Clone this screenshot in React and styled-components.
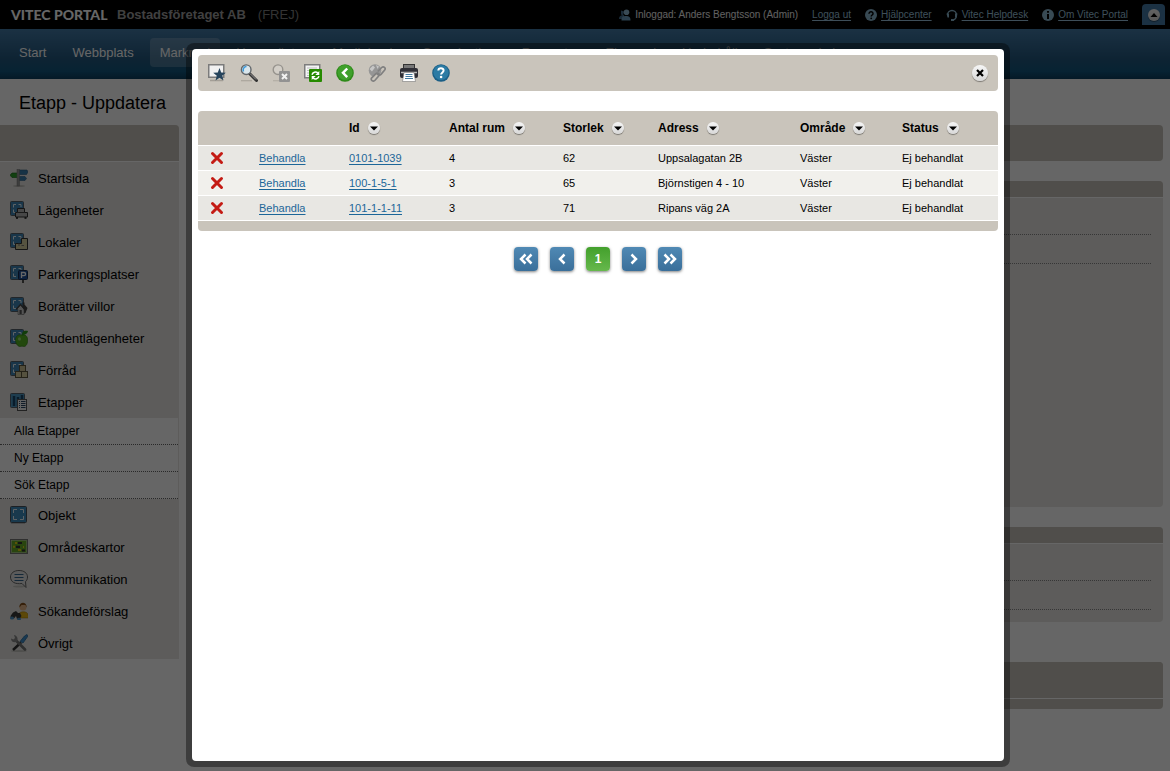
import React, { useState } from 'react'
import styled, { createGlobalStyle } from 'styled-components'

const GlobalStyle = createGlobalStyle`
  * {
    box-sizing: border-box;
  }
  body {
    margin: 0;
    background-color: #fff;
    font-family: "Liberation Sans", Arial, sans-serif;
    font-size: 12px;
    color: #000;
  }
  button {
    padding: 0;
    border: none;
    background: none;
    font-family: inherit;
    cursor: pointer;
  }
  ul {
    margin: 0;
    padding: 0;
    list-style: none;
  }
  svg {
    display: block;
    flex: none;
  }
`

const Page = styled.div`
  min-height: 100vh;
  overflow: hidden;
`
const TopBar = styled.header`
  height: 29px;
  padding: 0 5px 0 11px;
  display: flex;
  align-items: center;
  background-color: #000;
  white-space: nowrap;
`
const Logo = styled.span`
  width: 106px;
  font-family: Lato, "Open Sans", sans-serif;
  font-size: 14px;
  font-weight: 900;
  color: #fff;
`
const Company = styled.span`
  font-size: 13px;
  font-weight: 700;
  color: #a0a0a0;
`
const Site = styled.span`
  margin-left: 12px;
  font-size: 13px;
  color: #808080;
`
const TopLinks = styled.div`
  margin-left: auto;
  display: flex;
  align-items: center;
  gap: 14px;
  font-size: 10px;
  color: #f0f0f0;
`
const TopItem = styled.span`
  display: flex;
  align-items: center;
  gap: 4px;
`
const TopLink = styled.a`
  color: #9cc4de;
  text-underline-offset: 2px;
`
const CollapseTab = styled.div`
  align-self: flex-end;
  width: 23px;
  height: 21px;
  display: flex;
  justify-content: center;
  align-items: center;
  border-radius: 4px 4px 0 0;
  background-color: #447ba8;
`

const Nav = styled.nav`
  height: 50px;
  padding: 0 9px 3px;
  display: flex;
  align-items: center;
  gap: 6px;
  background: linear-gradient(#447ba8, #23587f 60%, #12577f 85%, #0c4060);
`
const NavLink = styled.a`
  height: 29px;
  padding: 0 10px;
  line-height: 29px;
  border-radius: 4px;
  font-size: 13px;
  color: #fff;
  text-decoration: none;
  background-color: ${({ $active }) => ($active ? 'rgba(255, 255, 255, 0.2)' : 'transparent')};
`

const Title = styled.h1`
  height: 46px;
  margin: 0;
  padding: 0 19px;
  line-height: 48px;
  font-size: 18px;
  font-weight: 400;
`
const Columns = styled.div`
  display: flex;
  align-items: flex-start;
  gap: 20px;
  padding-right: 7px;
`
const Sidebar = styled.aside`
  flex: none;
  width: 179px;
  background-color: #e8e7e3;
  border-radius: 0 4px 0 0;
`
const SidebarHead = styled.div`
  height: 37px;
  border-bottom: 1px solid #fff;
  border-radius: 0 4px 0 0;
  background-color: #c9c4bb;
`
const MenuLink = styled.a`
  height: 32px;
  padding: 0 10px;
  display: flex;
  align-items: center;
  gap: 10px;
  font-size: 13px;
  color: #000;
  text-decoration: none;
`
const SubMenu = styled.ul`
  margin-right: 1px;
  background-color: #fff;
`
const SubLink = styled.a`
  height: 27px;
  padding: 0 14px;
  display: block;
  border-bottom: 1px dotted #666;
  line-height: 26px;
  color: #000;
  text-decoration: none;
`

const Content = styled.main`
  flex: 1;
  display: flex;
  flex-direction: column;
  gap: 20px;
`
const Panel = styled.section`
  overflow: hidden;
  border-radius: 4px;
  background-color: ${({ $dark }) => ($dark ? '#c9c4bb' : '#e8e7e3')};
`
const PanelHead = styled.div`
  height: ${({ $tall }) => ($tall ? '37px' : '17px')};
  border-bottom: 1px solid #fff;
  background-color: #c9c4bb;
`
const PanelBar = styled.div`
  height: 36px;
  border-radius: 4px;
  background-color: #c9c4bb;
`
const PanelBody = styled.div`
  padding: 8px 12px 12px;
  min-height: ${({ $height }) => $height}px;
`
const PanelLine = styled.div`
  height: 29px;
  border-bottom: 1px dotted #888;
`
const PanelFoot = styled.div`
  height: 10px;
`
const Spacer = styled.div`
  height: 0;
`

const Overlay = styled.div`
  position: fixed;
  inset: 0;
  padding: 43px 160px 4px 186px;
  display: flex;
  background-color: rgba(0, 0, 0, 0.6);
`
const Frame = styled.div`
  flex: 1;
  padding: 6px;
  display: flex;
  border-radius: 8px;
  background-color: rgba(0, 0, 0, 0.4);
`
const Dialog = styled.div`
  flex: 1;
  padding: 6px;
  border-radius: 4px;
  background-color: #fff;
`
const Toolbar = styled.div`
  height: 36px;
  margin-bottom: 20px;
  padding: 0 10px;
  display: flex;
  align-items: center;
  gap: 14px;
  border-radius: 4px;
  background-color: #c9c4bb;
`
const IconButton = styled.button`
  width: 18px;
  height: 18px;
`
const RoundButton = styled.button`
  flex: none;
  width: ${({ $size }) => $size}px;
  height: ${({ $size }) => $size}px;
  display: flex;
  justify-content: center;
  align-items: center;
  border-radius: 50%;
  background: linear-gradient(#f6f6f6, #d8d8d8);
  box-shadow: 0 1px 1px rgba(0, 0, 0, 0.4);
`
const CloseSlot = styled.div`
  margin-left: auto;
`

const TableWrap = styled.div`
  overflow: hidden;
  border-radius: 4px;
`
const Table = styled.table`
  width: 100%;
  table-layout: fixed;
  border-collapse: separate;
  border-spacing: 0;
  text-align: left;
  white-space: nowrap;
`
const Th = styled.th`
  height: 35px;
  padding: 0 0 0 10px;
  border-bottom: 1px solid #fff;
  background-color: #c9c4bb;
  font-size: 12px;
`
const ThInner = styled.div`
  display: flex;
  align-items: center;
  gap: 8px;
`
const Row = styled.tr`
  background-color: #e8e7e3;
  &:nth-child(even) {
    background-color: #f1f0ec;
  }
`
const Td = styled.td`
  height: 25px;
  padding: 0 0 0 10px;
  border-bottom: 1px solid #fff;
  font-size: 11px;
`
const TableFoot = styled.div`
  height: 10px;
  background-color: #c9c4bb;
`
const DataLink = styled.a`
  color: #1c6698;
  text-underline-offset: 2px;
`
const DeleteButton = styled.button`
  display: block;
  margin-left: 2px;
`

const Pagination = styled.nav`
  margin-top: 16px;
  display: flex;
  justify-content: center;
  gap: 12px;
`
const PageButton = styled.button`
  width: 24px;
  height: 24px;
  display: flex;
  justify-content: center;
  align-items: center;
  border-radius: 4px;
  box-shadow: 0 1px 3px rgba(0, 0, 0, 0.5);
  color: #fff;
  font-size: 12px;
  font-weight: 700;
  background: ${({ $current }) =>
    $current ? 'linear-gradient(#43a02c, #66b84c)' : 'linear-gradient(#5089b4, #3a6f9a)'};
`

const Icon = ({ size = 18, box = 18, children }) => (
  <svg width={size} height={size} viewBox={`0 0 ${box} ${box}`} aria-hidden="true">
    {children}
  </svg>
)

// blue floor plan tile that most of the menu icons are built on
const Plan = () => (
  <>
    <rect x="0.5" y="0.5" width="13" height="14" rx="1" fill="#3f87b8" stroke="#56606a" />
    <path d="M3.500 6.500V3.500H6M8.500 3.500h2.500V6M3.500 8.500v3H6" fill="none" stroke="#e8f4fc" />
  </>
)

const menuIcons = {
  start: (
    <>
      <ellipse cx="9" cy="17" rx="6" ry="1" fill="#c0beb8" />
      <path d="M9 1h8l1 2-1.500 2.500H9z" fill="#3a7fb0" stroke="#2f5f85" strokeWidth="0.600" />
      <path d="M9 7.500h6l1.500 2-1.500 2H9z" fill="#3a7fb0" stroke="#2f5f85" strokeWidth="0.600" />
      <path d="M8 4H2L0 6.200 2 8.500h6z" fill="#2fa02c" stroke="#156a15" strokeWidth="0.600" />
      <rect x="7" y="0.500" width="2.500" height="16.500" fill="#999" stroke="#777" strokeWidth="0.500" />
    </>
  ),
  apartment: (
    <>
      <Plan />
      <path d="M7.500 7.500h7v4h3v4.500h-12v-4.500h2z" fill="#b5b5b5" stroke="#333" />
      <path d="M7.500 11.500h7" stroke="#444" />
      <path d="M6 17h2M14.500 17h2" stroke="#111" strokeWidth="1.500" />
    </>
  ),
  premises: (
    <>
      <Plan />
      <path d="M5.500 10.500H11.500V5.500h6v11h-12z" fill="#d8cfa0" stroke="#333" />
      <path d="M9 10.500v2.500M14 12.500h-2.500" stroke="#777" fill="none" />
    </>
  ),
  parking: (
    <>
      <Plan />
      <path d="M13 14v4" stroke="#222" strokeWidth="1.500" />
      <rect x="8.500" y="5.500" width="9" height="9" rx="1" fill="#1d4f9a" stroke="#152a4c" />
      <path d="M11.500 13V7.500H14a1.600 1.600 0 0 1 0 3.200h-2.500" fill="none" stroke="#fff" strokeWidth="1.300" />
    </>
  ),
  villa: (
    <>
      <Plan />
      <path d="M12.500 8V5.500h2v2L17.500 11l-2 5-3.500 1.500z" fill="#444" />
      <path d="M7 12l3.500-4 3.500 4v5.500H8V12.500z" fill="#d4d4d4" stroke="#666" strokeWidth="0.600" />
      <path d="M6 12.500L10.500 7.500l4 5" fill="none" stroke="#444" strokeWidth="1.200" />
      <rect x="9.500" y="13" width="2.200" height="4" fill="#555" />
    </>
  ),
  student: (
    <>
      <Plan />
      <path d="M12 6c-3.500-1-6.500 1-6.500 5.200 0 3.800 2.700 6.300 4.300 6.300.900 0 1.200-.300 2.200-.300s1.300.300 2.200.300c1.600 0 3.500-2.500 3.500-6.300 0-4.200-2.700-6-5.700-5.200z" fill="#55b522" stroke="#2f7a10" strokeWidth="0.600" />
      <path d="M12 6.500c-.500-4 2.500-5.500 6-4.500-.500 3-3 3.500-6 4.500z" fill="#2f9a1d" />
      <ellipse cx="9.500" cy="10" rx="1.500" ry="1.800" fill="#9ddc72" />
    </>
  ),
  storage: (
    <>
      <Plan />
      <rect x="9.500" y="4.500" width="6" height="6" fill="#cdc193" stroke="#5c563e" />
      <rect x="5.500" y="10.500" width="6" height="6" fill="#d8cc9f" stroke="#5c563e" />
      <rect x="11.500" y="10.500" width="6" height="6" fill="#d8cc9f" stroke="#5c563e" />
    </>
  ),
  stage: (
    <>
      <rect x="0.500" y="0.500" width="14" height="14" rx="1" fill="#4d9ac6" stroke="#56606a" />
      <path d="M4 3v10M8 4v9M12 2v8" stroke="#18486c" strokeWidth="2.500" />
      <rect x="7.500" y="6.500" width="9" height="11" fill="#f4f4f4" stroke="#555" />
      <path d="M9 8.500h1M11 8.500h4.500M9 10.500h1M11 10.500h4.500M9 12.500h1M11 12.500h4.500M9 14.500h1M11 14.500h4.500" stroke="#2b4a68" />
    </>
  ),
  object: (
    <>
      <path d="M1 17.500h14" stroke="#bbb" />
      <rect x="0.500" y="0.500" width="16" height="16" rx="1" fill="#3f8fc1" stroke="#4a525a" />
      <path d="M3.500 7V3.500H7M10 3.500h3.500V7M13.500 10v3.500H10M7 13.500H3.500V10" fill="none" stroke="#e8f4fc" />
    </>
  ),
  map: (
    <>
      <rect x="0.500" y="1.500" width="17" height="14" fill="#67ad27" stroke="#777" />
      <rect x="1.500" y="2.500" width="15" height="12" fill="none" stroke="#c8d8b8" strokeWidth="0.600" />
      <path d="M8 5h4M6 8.800h4M12 12.500h3" stroke="#333" strokeWidth="2.200" />
      <path d="M5 5h2M3 8.800h2M8 12h3M13 9h1" stroke="#e5cf13" strokeWidth="2" />
    </>
  ),
  chat: (
    <>
      <ellipse cx="9" cy="16.500" rx="6" ry="1" fill="#c6c5c0" />
      <path d="M9 .500c5 0 8.500 2.700 8.500 6.500 0 2.200-.800 3.500-2 4.700l.500 5.800-4-4C5 14.500.500 11.800.500 7 .500 3.200 4 .500 9 .500z" fill="#e4e4e4" stroke="#666" />
      <path d="M4.500 4.500h9M4.500 7.500h9M4.500 10.500h9" stroke="#35678f" />
    </>
  ),
  seeker: (
    <>
      <path d="M9 16V11.500c1-2 7-2.500 8.500 0 1 1.500 1 3 1 4.500z" fill="#e5b316" stroke="#9c7406" strokeWidth="0.500" />
      <circle cx="13" cy="5" r="3.500" fill="#e7b78a" />
      <path d="M9.500 5.500C8.500-1 17.500-1 16.500 5.500L15.500 3h-4z" fill="#87511d" />
      <path d="M3 10.500l3-1.500 2 2h2l1.500 3-2 3H7l-1-3-2 2.500-3 .500-.500-3z" fill="#3a3a3a" />
      <ellipse cx="2" cy="16" rx="2" ry="1.500" fill="#4b92c6" />
      <ellipse cx="9" cy="17" rx="2" ry="1.300" fill="#4b92c6" />
    </>
  ),
  tools: (
    <>
      <ellipse cx="9" cy="17" rx="8" ry="1" fill="#c6c5c0" />
      <path d="M10 7.500L14.500 2l2.500-1.500 1 1.500-5 7z" fill="#3d8fce" stroke="#2f6d9d" strokeWidth="0.800" />
      <path d="M11 8.500L3 16" stroke="#333" strokeWidth="2.400" />
      <path d="M6 6.500l9 9" stroke="#777" strokeWidth="2.800" strokeLinecap="round" />
      <path d="M4 1l1 3-1.500 1.500-2.500-1C1 8 4 9 7 7.500 8.500 4.500 7 1.500 4 1z" fill="#8a8a8a" />
    </>
  ),
}

const toolIcons = {
  favourite: (
    <>
      <path d="M2 16.500h13" stroke="#a39e96" strokeWidth="1.500" />
      <rect x="0.750" y="0.750" width="15" height="12.500" fill="#f1f1f1" stroke="#7b7b7b" strokeWidth="1.500" />
      <path d="M11.500 4l1.700 4.500 4.600.200-3.600 3 1.300 4.800-4-2.800-4 2.800 1.300-4.800-3.600-3 4.600-.200z" fill="#26445c" />
    </>
  ),
  search: (
    <>
      <path d="M1 16.700h11" stroke="#aaa59c" strokeWidth="1.200" />
      <path d="M9.500 9.500l7 7" stroke="#333" strokeWidth="3" strokeLinecap="round" />
      <path d="M10 9.500l6 6" stroke="#999" strokeWidth="1" />
      <circle cx="6.200" cy="5.700" r="4.800" fill="#d9e6ec" stroke="#62676b" strokeWidth="1.400" />
      <path d="M3.500 7.500a3.500 3.500 0 0 1 3-5" fill="none" stroke="#3b9ada" strokeWidth="1.500" />
    </>
  ),
  clearSearch: (
    <>
      <path d="M1 16.700h6" stroke="#b3aea5" strokeWidth="1.200" />
      <circle cx="6" cy="5.700" r="4.800" fill="#d2cec7" stroke="#96938d" strokeWidth="1.400" />
      <path d="M9 9.500l2 2" stroke="#96938d" strokeWidth="2" />
      <rect x="7" y="7" width="11" height="11" rx="1" fill="#929292" />
      <path d="M10 10l5 5M15 10l-5 5" stroke="#f2f2f2" strokeWidth="2" />
    </>
  ),
  refresh: (
    <>
      <rect x="0.750" y="0.750" width="15" height="13" fill="#f4f4f4" stroke="#7d7d7d" strokeWidth="1.500" />
      <path d="M3 4h10M3 6.500h10M3 9h3M3 11.500h2" stroke="#bdbdbd" />
      <rect x="5" y="5" width="13" height="13" rx="1" fill="#268a00" />
      <path d="M8 10.800a3.700 3.700 0 0 1 5.800-1.900M15 12.200a3.700 3.700 0 0 1-5.800 1.900" fill="none" stroke="#fff" strokeWidth="1.500" />
      <path d="M15.300 7v4h-4zM7.700 16v-4h4z" fill="#fff" />
    </>
  ),
  back: (
    <>
      <circle cx="9" cy="9" r="8.800" fill="#2d8a18" />
      <circle cx="9" cy="8.500" r="7.600" fill="#3fa02b" />
      <path d="M11.200 4.500L7 8.800l4.200 4.300" fill="none" stroke="#fff" strokeWidth="2.500" />
    </>
  ),
  link: (
    <>
      <circle cx="7" cy="6.500" r="6.300" fill="#969696" />
      <path d="M1.500 5l3.500-3.500 2 2-3 4zM8 1l3 1.500-1.500 2.500z" fill="#c6c6c6" />
      <path d="M3.700 13.800l4-4c1.800-1.800 4.500.200 3 2.200l-3.700 4.300c-1.800 2-5-.500-3.300-2.500z" fill="#c9c4bb" stroke="#808080" strokeWidth="1.700" />
      <path d="M9.700 7.500l4-4c1.800-1.800 4.500.500 3 2.500l-3.700 4.300c-1.500 1.500-4 .700-3.800-1" fill="none" stroke="#808080" strokeWidth="1.700" />
    </>
  ),
  print: (
    <>
      <rect x="3.500" y="0.500" width="11" height="5" fill="#777" stroke="#333" />
      <rect x="0" y="4" width="18" height="10" rx="2" fill="#2e2e35" />
      <path d="M1 8.500h16" stroke="#bbb" strokeWidth="1.500" />
      <path d="M4 8.500h10l1.500 9h-13z" fill="#fff" stroke="#777" strokeWidth="0.600" />
      <path d="M5.500 10.500h7M5.500 12.500h7M5 14.500h8" stroke="#447a9f" />
    </>
  ),
  help: (
    <>
      <circle cx="9" cy="9" r="8.800" fill="#1b5f86" />
      <circle cx="9" cy="8.500" r="7.600" fill="#2c7ba4" />
      <path d="M6.300 6.500C6.500 3.500 11.700 3.600 11.600 6.600c0 1.800-2.500 1.900-2.500 4" fill="none" stroke="#fff" strokeWidth="2" />
      <circle cx="9.100" cy="13" r="1.300" fill="#fff" />
    </>
  ),
}

const smallIcons = {
  user: (
    <>
      <path d="M2 1.500l3 1-1 4-2-1zM0 10c0-3 2-4 5-4v4z" fill="#41698a" />
      <circle cx="7.500" cy="3.200" r="2.800" fill="#8fb8d4" />
      <path d="M2.500 11.500c0-4 1.500-4.500 4.500-4.500s4.500 1 4.500 4.500z" fill="#6c9fc2" />
    </>
  ),
  question: (
    <>
      <circle cx="6" cy="6" r="6" fill="#8db9d2" />
      <path d="M4 4.700C4 2 8.200 2.200 8 4.700 8 6 6.200 6 6.200 7.500" fill="none" stroke="#000" strokeWidth="1.500" />
      <circle cx="6.200" cy="9.300" r="0.900" fill="#000" />
    </>
  ),
  headset: (
    <>
      <path d="M1.500 6a4.500 4.500 0 0 1 9 0c0 3-1 4.500-3.500 5" fill="none" stroke="#8db9d2" strokeWidth="1.300" />
      <path d="M0.500 4.500h2.500v4H1.500zM9 4.500h2.500l-1 4H9zM5 10h3v2H5z" fill="#8db9d2" />
    </>
  ),
  info: (
    <>
      <circle cx="6" cy="6" r="6" fill="#8db9d2" />
      <path d="M6 5v5M6 2v1.800" stroke="#000" strokeWidth="2" />
    </>
  ),
}

const navItems = ['Start', 'Webbplats', 'Marknad', 'Hyresgäster', 'Mediabank', 'Organisation', 'Rapporter', 'Ekonomi', 'Underhåll', 'Systemadmin']

const menuItems = [
  { icon: 'start', label: 'Startsida' },
  { icon: 'apartment', label: 'Lägenheter' },
  { icon: 'premises', label: 'Lokaler' },
  { icon: 'parking', label: 'Parkeringsplatser' },
  { icon: 'villa', label: 'Borätter villor' },
  { icon: 'student', label: 'Studentlägenheter' },
  { icon: 'storage', label: 'Förråd' },
  { icon: 'stage', label: 'Etapper', sub: ['Alla Etapper', 'Ny Etapp', 'Sök Etapp'] },
  { icon: 'object', label: 'Objekt' },
  { icon: 'map', label: 'Områdeskartor' },
  { icon: 'chat', label: 'Kommunikation' },
  { icon: 'seeker', label: 'Sökandeförslag' },
  { icon: 'tools', label: 'Övrigt' },
]

const tools = [
  ['favourite', 'Favorit'],
  ['search', 'Sök'],
  ['clearSearch', 'Rensa sökning'],
  ['refresh', 'Uppdatera'],
  ['back', 'Tillbaka'],
  ['link', 'Länk'],
  ['print', 'Skriv ut'],
  ['help', 'Hjälp'],
]

const columns = ['Id', 'Antal rum', 'Storlek', 'Adress', 'Område', 'Status']
const columnWidths = [51, 90, 100, 114, 95, 142, 102, 106]

const rows = [
  { id: '0101-1039', rooms: 4, size: 62, address: 'Uppsalagatan 2B', area: 'Väster', status: 'Ej behandlat' },
  { id: '100-1-5-1', rooms: 3, size: 65, address: 'Björnstigen 4 - 10', area: 'Väster', status: 'Ej behandlat' },
  { id: '101-1-1-11', rooms: 3, size: 71, address: 'Ripans väg 2A', area: 'Väster', status: 'Ej behandlat' },
]

function Header() {
  return (
    <>
      <TopBar>
        <Logo>VITEC PORTAL</Logo>
        <Company>Bostadsföretaget AB</Company>
        <Site>(FREJ)</Site>
        <TopLinks>
          <TopItem>
            <Icon size={12} box={12}>{smallIcons.user}</Icon>
            Inloggad: Anders Bengtsson (Admin)
          </TopItem>
          <TopLink href="#logout">Logga ut</TopLink>
          <TopItem>
            <Icon size={12} box={12}>{smallIcons.question}</Icon>
            <TopLink href="#help">Hjälpcenter</TopLink>
          </TopItem>
          <TopItem>
            <Icon size={12} box={12}>{smallIcons.headset}</Icon>
            <TopLink href="#helpdesk">Vitec Helpdesk</TopLink>
          </TopItem>
          <TopItem>
            <Icon size={12} box={12}>{smallIcons.info}</Icon>
            <TopLink href="#about">Om Vitec Portal</TopLink>
          </TopItem>
          <CollapseTab>
            <RoundButton $size={12} aria-label="Dölj">
              <Icon size={8} box={8}><path d="M0.500 6L4 2l3.500 4z" /></Icon>
            </RoundButton>
          </CollapseTab>
        </TopLinks>
      </TopBar>
      <Nav>
        {navItems.map((item) => (
          <NavLink key={item} href="#nav" $active={item === 'Marknad'}>{item}</NavLink>
        ))}
      </Nav>
    </>
  )
}

function Menu() {
  return (
    <Sidebar>
      <SidebarHead />
      <ul>
        {menuItems.map((item) => (
          <li key={item.label}>
            <MenuLink href="#menu">
              <Icon>{menuIcons[item.icon]}</Icon>
              {item.label}
            </MenuLink>
            {item.sub && (
              <SubMenu>
                {item.sub.map((label) => (
                  <li key={label}><SubLink href="#sub">{label}</SubLink></li>
                ))}
              </SubMenu>
            )}
          </li>
        ))}
      </ul>
    </Sidebar>
  )
}

function ObjectTable({ rows, onDelete }) {
  return (
    <TableWrap>
      <Table>
        <colgroup>
          {columnWidths.map((width, i) => <col key={i} width={width} />)}
        </colgroup>
        <thead>
          <tr>
            <Th />
            <Th />
            {columns.map((column) => (
              <Th key={column}>
                <ThInner>
                  {column}
                  <RoundButton $size={12} aria-label={`Sortera ${column}`}>
                    <Icon size={8} box={8}><path d="M0 2.500h8L4 6.500z" /></Icon>
                  </RoundButton>
                </ThInner>
              </Th>
            ))}
          </tr>
        </thead>
        <tbody>
          {rows.map((row) => (
            <Row key={row.id}>
              <Td>
                <DeleteButton aria-label={`Ta bort ${row.id}`} onClick={() => onDelete(row.id)}>
                  <Icon size={14} box={14}>
                    <path d="M2.500 2.500l9 9M11.500 2.500l-9 9" stroke="#c41b14" strokeWidth="3" strokeLinecap="round" />
                  </Icon>
                </DeleteButton>
              </Td>
              <Td><DataLink href="#edit">Behandla</DataLink></Td>
              <Td><DataLink href="#object">{row.id}</DataLink></Td>
              <Td>{row.rooms}</Td>
              <Td>{row.size}</Td>
              <Td>{row.address}</Td>
              <Td>{row.area}</Td>
              <Td>{row.status}</Td>
            </Row>
          ))}
        </tbody>
      </Table>
      <TableFoot />
    </TableWrap>
  )
}

const Arrow = ({ d }) => (
  <Icon size={14} box={14}>
    <path d={d} fill="none" stroke="#fff" strokeWidth="2.500" />
  </Icon>
)

function App() {
  const [open, setOpen] = useState(true)
  const [items, setItems] = useState(rows)

  const deleteHandler = (id) => {
    setItems(items.filter((item) => item.id !== id))
  }

  return (
    <>
      <GlobalStyle />
      <Page>
        <Header />
        <Title>Etapp - Uppdatera</Title>
        <Columns>
          <Menu />
          <Content>
            <PanelBar />
            <Panel>
              <PanelHead />
              <PanelBody $height={309}>
                <PanelLine />
                <PanelLine />
              </PanelBody>
            </Panel>
            <Panel>
              <PanelHead />
              <PanelBody $height={78}>
                <PanelLine />
                <PanelLine />
              </PanelBody>
            </Panel>
            <Spacer />
            <Panel $dark>
              <PanelHead $tall />
              <PanelFoot />
            </Panel>
          </Content>
        </Columns>
      </Page>
      {open && (
        <Overlay>
          <Frame>
            <Dialog role="dialog" aria-label="Etapp">
              <Toolbar>
                {tools.map(([icon, label]) => (
                  <IconButton key={icon} aria-label={label}>
                    <Icon>{toolIcons[icon]}</Icon>
                  </IconButton>
                ))}
                <CloseSlot>
                  <RoundButton $size={16} aria-label="Stäng" onClick={() => setOpen(false)}>
                    <Icon size={8} box={8}>
                      <path d="M1 1l6 6M7 1L1 7" stroke="#000" strokeWidth="2.200" />
                    </Icon>
                  </RoundButton>
                </CloseSlot>
              </Toolbar>
              <ObjectTable rows={items} onDelete={deleteHandler} />
              <Pagination aria-label="Sidor">
                <PageButton aria-label="Första"><Arrow d="M6.500 2.500L2 7 6.500 11.500M12.500 2.500L8 7l4.500 4.500" /></PageButton>
                <PageButton aria-label="Föregående"><Arrow d="M9.500 2.500L5 7l4.500 4.500" /></PageButton>
                <PageButton $current>1</PageButton>
                <PageButton aria-label="Nästa"><Arrow d="M4.500 2.500L9 7l-4.500 4.500" /></PageButton>
                <PageButton aria-label="Sista"><Arrow d="M1.500 2.500L6 7 1.500 11.500M7.500 2.500L12 7 7.500 11.500" /></PageButton>
              </Pagination>
            </Dialog>
          </Frame>
        </Overlay>
      )}
    </>
  )
}

export default App
